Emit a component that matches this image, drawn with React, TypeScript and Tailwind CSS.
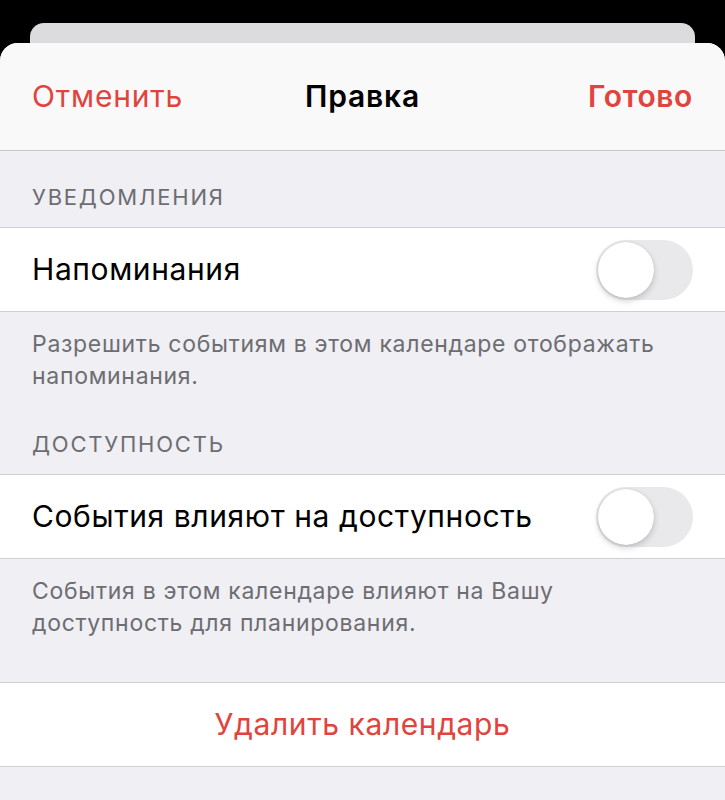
const font = { fontFamily: "Inter, 'Noto Sans', sans-serif" };

function Toggle() {
  return (
    <div className="relative h-[60px] w-[97px] rounded-full bg-[#e9e9ec]">
      <div className="absolute left-[2px] top-[2px] h-[56px] w-[56px] rounded-full bg-white shadow-[0_3px_6px_rgba(0,0,0,0.18),0_0_1px_rgba(0,0,0,0.2)]" />
    </div>
  );
}

function SwitchRow({ label }: { label: string }) {
  return (
    <div className="flex h-[85px] items-center justify-between border-y border-[#cfcfd3] bg-white pl-[32px] pr-[32px]">
      <span className="text-[30px] tracking-[0.6px] text-black">{label}</span>
      <Toggle />
    </div>
  );
}

function SectionTitle({ children }: { children: string }) {
  return (
    <div className="flex h-[76px] items-end px-[32px] pb-[13px] text-[22px] tracking-[1.8px] text-[#6d6d72]">
      {children}
    </div>
  );
}

function Footer({ children }: { children: string }) {
  return (
    <div className="px-[32px] pt-[16px] text-[23px] leading-[32px] tracking-[0.7px] text-[#6d6d72]">
      {children}
    </div>
  );
}

export default function App() {
  return (
    <div className="h-[800px] w-[725px] overflow-hidden bg-black" style={font}>
      <div className="px-[30px] pt-[23px]">
        <div className="h-[20px] rounded-t-[14px] bg-[#dcdcde]" />
      </div>
      <div className="h-[757px] overflow-hidden rounded-t-[18px] bg-[#efeff4]">
        <div className="grid h-[108px] grid-cols-3 items-center border-b border-[#c6c6c9] bg-[#f9f9f9] px-[32px]">
          <button className="justify-self-start text-[30px] tracking-[0.8px] text-[#e0443c]">Отменить</button>
          <span className="justify-self-center text-[30px] font-semibold tracking-[0.8px] text-black">Правка</span>
          <button className="justify-self-end text-[30px] font-semibold tracking-[0.6px] text-[#e0443c]">Готово</button>
        </div>
        <SectionTitle>УВЕДОМЛЕНИЯ</SectionTitle>
        <SwitchRow label="Напоминания" />
        <Footer>Разрешить событиям в этом календаре отображать напоминания.</Footer>
        <div className="h-[6px]" />
        <SectionTitle>ДОСТУПНОСТЬ</SectionTitle>
        <SwitchRow label="События влияют на доступность" />
        <Footer>События в этом календаре влияют на Вашу доступность для планирования.</Footer>
        <div className="h-[43px]" />
        <div className="flex h-[85px] items-center justify-center border-y border-[#cfcfd3] bg-white">
          <button className="text-[30px] tracking-[0.6px] text-[#e0443c]">Удалить календарь</button>
        </div>
      </div>
    </div>
  );
}
